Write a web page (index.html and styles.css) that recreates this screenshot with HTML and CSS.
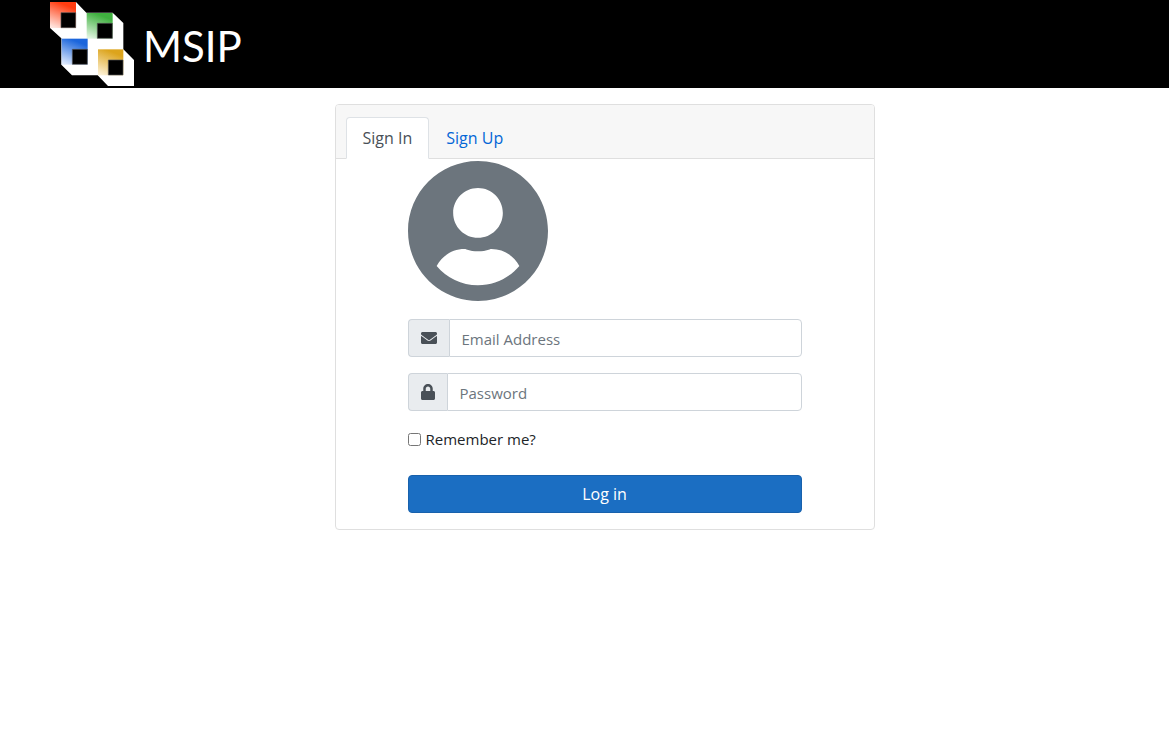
FILE: index.html
```
<!DOCTYPE html>
<html lang="en">
<head>
  <meta charset="UTF-8">
  <meta name="viewport" content="width=device-width, initial-scale=1">
  <title>MSIP</title>
  <link rel="stylesheet" href="styles.css">
</head>
<body>

  <header class="navbar">
    <a class="brand" href="#">
      <svg class="brand-logo" viewBox="0 0 252 252" aria-hidden="true">
        <defs>
          <linearGradient id="red" x1="0.6" y1="0" x2="0.2" y2="1">
            <stop offset="0.1" stop-color="#ff3c10"/>
            <stop offset="1" stop-color="#ffe4de"/>
          </linearGradient>
          <linearGradient id="green" x1="0.6" y1="0" x2="0.2" y2="1">
            <stop offset="0.1" stop-color="#3fb03f"/>
            <stop offset="1" stop-color="#e0f4e0"/>
          </linearGradient>
          <linearGradient id="blue" x1="0.6" y1="0" x2="0.2" y2="1">
            <stop offset="0.1" stop-color="#1c66dc"/>
            <stop offset="1" stop-color="#dce8fc"/>
          </linearGradient>
          <linearGradient id="yellow" x1="0.6" y1="0" x2="0.2" y2="1">
            <stop offset="0.1" stop-color="#dca41c"/>
            <stop offset="1" stop-color="#fcf0d4"/>
          </linearGradient>
        </defs>
        <path fill="#fff" d="M0 0H78L109 32H188L220 63V142L252 174V252H174L143 220H66L34 188V109L0 78Z"/>
        <path fill="url(#red)" d="M0 0H78V78H0Z"/>
        <path fill="url(#green)" d="M110 33H188V110H110Z"/>
        <path fill="url(#blue)" d="M35 110H113V188H35Z"/>
        <path fill="url(#yellow)" d="M144 142H220V220H144Z"/>
        <path stroke="#555" stroke-width="2" d="M33 32H77V77H33ZM142 64H187V109H142ZM67 142H112V187H67ZM175 174H219V219H175Z"/>
      </svg>
      <span class="brand-name">MSIP</span>
    </a>
  </header>

  <main class="container">
    <div class="card">
      <nav class="card-header">
        <a class="tab active" href="#signin">Sign In</a>
        <a class="tab" href="#signup">Sign Up</a>
      </nav>

      <form class="card-body" id="signin">
        <svg class="avatar" viewBox="0 0 496 496" aria-hidden="true">
          <path d="M248 0C111 0 0 111 0 248s111 248 248 248 248-111 248-248S385 0 248 0zm0 96c48.600 0 88 39.400 88 88s-39.400 88-88 88-88-39.400-88-88 39.400-88 88-88zm0 344c-58.700 0-111.300-26.600-146.500-68.200 18.800-35.400 55.600-59.800 98.500-59.800 2.400 0 4.800.400 7.100 1.100 13 4.200 26.600 6.900 40.900 6.900s28-2.700 40.900-6.900c2.300-.7 4.700-1.100 7.100-1.100 42.900 0 79.700 24.400 98.500 59.800C359.300 413.400 306.700 440 248 440z"/>
        </svg>

        <div class="input-group">
          <label class="input-icon" for="email" aria-label="Email Address">
            <svg viewBox="0 0 512 512" width="16" height="16" aria-hidden="true">
              <path d="M502.300 190.800c3.900-3.100 9.700-.2 9.700 4.700V400c0 26.500-21.500 48-48 48H48c-26.500 0-48-21.500-48-48V195.600c0-5 5.700-7.800 9.700-4.700 22.400 17.400 52.100 39.500 154.100 113.600 21.100 15.400 56.700 47.800 92.200 47.600 35.700.3 72-32.800 92.300-47.600 102-74.100 131.600-96.300 154-113.700zM256 320c23.200.4 56.600-29.200 73.400-41.400 132.700-96.300 142.800-104.700 173.400-128.700 5.800-4.500 9.200-11.500 9.200-18.900v-19c0-26.500-21.500-48-48-48H48c-26.500 0-48 21.500-48 48v19c0 7.400 3.400 14.300 9.200 18.900 30.600 23.900 40.700 32.400 173.400 128.700 16.800 12.200 50.200 41.800 73.400 41.400z"/>
            </svg>
          </label>
          <input type="email" id="email" placeholder="Email Address">
        </div>

        <div class="input-group">
          <label class="input-icon" for="password" aria-label="Password">
            <svg viewBox="0 0 448 512" width="14" height="16" aria-hidden="true">
              <path d="M400 224h-24v-72C376 68.200 307.800 0 224 0S72 68.200 72 152v72H48c-26.500 0-48 21.500-48 48v192c0 26.500 21.500 48 48 48h352c26.500 0 48-21.500 48-48V272c0-26.500-21.500-48-48-48zm-104 0H152v-72c0-39.700 32.300-72 72-72s72 32.300 72 72v72z"/>
            </svg>
          </label>
          <input type="password" id="password" placeholder="Password">
        </div>

        <div class="remember">
          <input type="checkbox" id="remember">
          <label for="remember">Remember me?</label>
        </div>

        <button class="btn" type="submit">Log in</button>
      </form>
    </div>
  </main>

</body>
</html>
```
FILE: styles.css
```
* {
  box-sizing: border-box;
}

body {
  margin: 0;
  background-color: #fff;
  color: #212529;
  font-family: "Segoe UI", "Open Sans", "Noto Sans", sans-serif;
  font-size: 15px;
  line-height: 24px;
}

.navbar {
  background-color: #000;
  padding: 2px 50px;
}

.brand {
  display: inline-flex;
  align-items: center;
  gap: 9px;
  color: #fff;
  text-decoration: none;
  vertical-align: top;
}

.brand-logo {
  width: 84px;
  height: 84px;
}

.brand-name {
  padding-top: 4px;
  font-family: Lato, sans-serif;
  font-size: 42px;
  line-height: 48px;
}

.container {
  padding: 16px 0 16px 40px;
}

.card {
  max-width: 540px;
  margin: 0 auto;
  border: 1px solid #dfdfdf;
  border-radius: 4px;
}

.card-header {
  display: flex;
  padding: 12px 10px 0;
  background-color: #f7f7f7;
  border-bottom: 1px solid #dfdfdf;
  border-radius: 3px 3px 0 0;
}

.tab {
  padding: 8px 16px;
  margin-bottom: -1px;
  border: 1px solid transparent;
  border-radius: 4px 4px 0 0;
  color: #0366d6;
  font-size: 16px;
  text-decoration: none;
}

.tab.active {
  color: #495057;
  background-color: #fff;
  border-color: #dee2e6 #dee2e6 #fff;
}

.card-body {
  padding: 2px 72px 16px;
}

.avatar {
  display: block;
  width: 140px;
  height: 140px;
  margin-bottom: 18px;
  fill: #6c757d;
}

.input-group {
  display: flex;
  height: 38px;
  margin-bottom: 16px;
}

.input-icon {
  display: flex;
  align-items: center;
  padding: 0 12px;
  background-color: #e9ecef;
  border: 1px solid #ced4da;
  border-right: none;
  border-radius: 4px 0 0 4px;
  fill: #495057;
}

.input-group input {
  flex: 1;
  min-width: 0;
  padding: 8px 12px 6px;
  border: 1px solid #ced4da;
  border-radius: 0 4px 4px 0;
  color: #495057;
  font: inherit;
}

.input-group input::placeholder {
  color: #6c757d;
}

.remember {
  display: flex;
  align-items: center;
  gap: 5px;
  margin-bottom: 24px;
}

.remember input {
  width: 13px;
  height: 13px;
  margin: 0;
}

.btn {
  display: block;
  width: 100%;
  height: 38px;
  background-color: #1b6ec2;
  border: 1px solid #1861ac;
  border-radius: 4px;
  color: #fff;
  font: inherit;
  font-size: 16px;
  cursor: pointer;
}
```
